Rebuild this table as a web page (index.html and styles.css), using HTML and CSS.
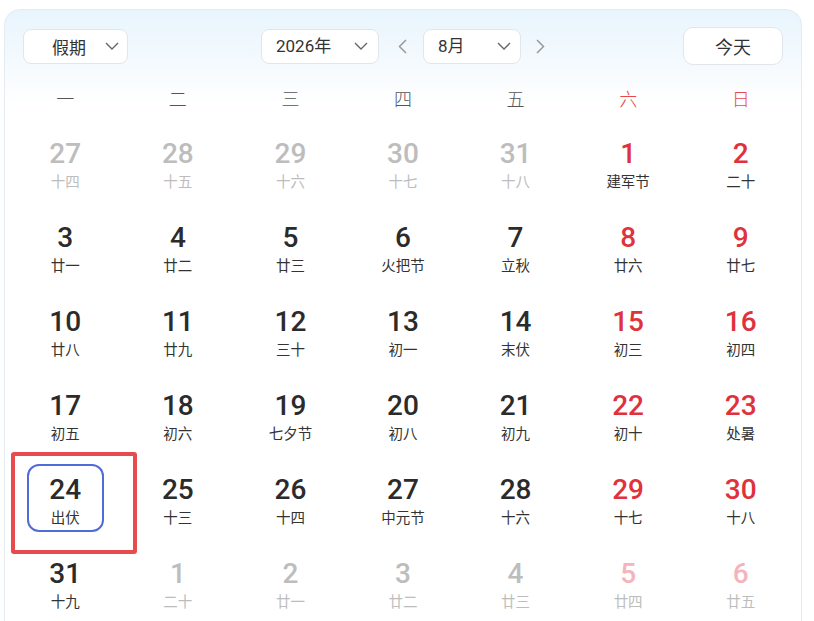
FILE: index.html
```html
<!DOCTYPE html>
<html lang="zh-CN">
<head>
<meta charset="utf-8">
<title>日历</title>
<link rel="stylesheet" href="styles.css">
</head>
<body>
<div class="card">
  <div class="header">
    <div class="left">
      <div class="select sel-holiday"><span class="sel-text">假期</span><svg class="chev" width="14" height="8" viewBox="0 0 14 8"><path d="M1 1l6 6 6-6" fill="none" stroke="#666" stroke-width="1.4"/></svg></div>
    </div>
    <div class="center">
      <div class="select sel-year"><span class="sel-text">2026年</span><svg class="chev" width="14" height="8" viewBox="0 0 14 8"><path d="M1 1l6 6 6-6" fill="none" stroke="#666" stroke-width="1.4"/></svg></div>
      <div class="arrow prev"><svg width="9" height="15" viewBox="0 0 9 15"><path d="M8 1L1.5 7.5 8 14" fill="none" stroke="#9a9a9a" stroke-width="1.5"/></svg></div>
      <div class="select sel-month"><span class="sel-text">8月</span><svg class="chev" width="14" height="8" viewBox="0 0 14 8"><path d="M1 1l6 6 6-6" fill="none" stroke="#666" stroke-width="1.4"/></svg></div>
      <div class="arrow next"><svg width="9" height="15" viewBox="0 0 9 15"><path d="M1 1l6.5 6.5L1 14" fill="none" stroke="#9a9a9a" stroke-width="1.5"/></svg></div>
    </div>
    <div class="right">
      <div class="today">今天</div>
    </div>
  </div>

  <div class="weekdays">
    <div class="wd">一</div><div class="wd">二</div><div class="wd">三</div><div class="wd">四</div><div class="wd">五</div><div class="wd weekend">六</div><div class="wd weekend">日</div>
  </div>

  <div class="grid">
    <div class="cell other"><div class="box"><div class="num">27</div><div class="lunar">十四</div></div></div>
    <div class="cell other"><div class="box"><div class="num">28</div><div class="lunar">十五</div></div></div>
    <div class="cell other"><div class="box"><div class="num">29</div><div class="lunar">十六</div></div></div>
    <div class="cell other"><div class="box"><div class="num">30</div><div class="lunar">十七</div></div></div>
    <div class="cell other"><div class="box"><div class="num">31</div><div class="lunar">十八</div></div></div>
    <div class="cell red"><div class="box"><div class="num">1</div><div class="lunar">建军节</div></div></div>
    <div class="cell red"><div class="box"><div class="num">2</div><div class="lunar">二十</div></div></div>

    <div class="cell"><div class="box"><div class="num">3</div><div class="lunar">廿一</div></div></div>
    <div class="cell"><div class="box"><div class="num">4</div><div class="lunar">廿二</div></div></div>
    <div class="cell"><div class="box"><div class="num">5</div><div class="lunar">廿三</div></div></div>
    <div class="cell"><div class="box"><div class="num">6</div><div class="lunar">火把节</div></div></div>
    <div class="cell"><div class="box"><div class="num">7</div><div class="lunar">立秋</div></div></div>
    <div class="cell red"><div class="box"><div class="num">8</div><div class="lunar">廿六</div></div></div>
    <div class="cell red"><div class="box"><div class="num">9</div><div class="lunar">廿七</div></div></div>

    <div class="cell"><div class="box"><div class="num">10</div><div class="lunar">廿八</div></div></div>
    <div class="cell"><div class="box"><div class="num">11</div><div class="lunar">廿九</div></div></div>
    <div class="cell"><div class="box"><div class="num">12</div><div class="lunar">三十</div></div></div>
    <div class="cell"><div class="box"><div class="num">13</div><div class="lunar">初一</div></div></div>
    <div class="cell"><div class="box"><div class="num">14</div><div class="lunar">末伏</div></div></div>
    <div class="cell red"><div class="box"><div class="num">15</div><div class="lunar">初三</div></div></div>
    <div class="cell red"><div class="box"><div class="num">16</div><div class="lunar">初四</div></div></div>

    <div class="cell"><div class="box"><div class="num">17</div><div class="lunar">初五</div></div></div>
    <div class="cell"><div class="box"><div class="num">18</div><div class="lunar">初六</div></div></div>
    <div class="cell"><div class="box"><div class="num">19</div><div class="lunar">七夕节</div></div></div>
    <div class="cell"><div class="box"><div class="num">20</div><div class="lunar">初八</div></div></div>
    <div class="cell"><div class="box"><div class="num">21</div><div class="lunar">初九</div></div></div>
    <div class="cell red"><div class="box"><div class="num">22</div><div class="lunar">初十</div></div></div>
    <div class="cell red"><div class="box"><div class="num">23</div><div class="lunar">处暑</div></div></div>

    <div class="cell selected"><div class="box"><div class="num">24</div><div class="lunar">出伏</div></div><div class="annot"></div></div>
    <div class="cell"><div class="box"><div class="num">25</div><div class="lunar">十三</div></div></div>
    <div class="cell"><div class="box"><div class="num">26</div><div class="lunar">十四</div></div></div>
    <div class="cell"><div class="box"><div class="num">27</div><div class="lunar">中元节</div></div></div>
    <div class="cell"><div class="box"><div class="num">28</div><div class="lunar">十六</div></div></div>
    <div class="cell red"><div class="box"><div class="num">29</div><div class="lunar">十七</div></div></div>
    <div class="cell red"><div class="box"><div class="num">30</div><div class="lunar">十八</div></div></div>

    <div class="cell"><div class="box"><div class="num">31</div><div class="lunar">十九</div></div></div>
    <div class="cell other"><div class="box"><div class="num">1</div><div class="lunar">二十</div></div></div>
    <div class="cell other"><div class="box"><div class="num">2</div><div class="lunar">廿一</div></div></div>
    <div class="cell other"><div class="box"><div class="num">3</div><div class="lunar">廿二</div></div></div>
    <div class="cell other"><div class="box"><div class="num">4</div><div class="lunar">廿三</div></div></div>
    <div class="cell other pale"><div class="box"><div class="num">5</div><div class="lunar">廿四</div></div></div>
    <div class="cell other pale"><div class="box"><div class="num">6</div><div class="lunar">廿五</div></div></div>
  </div>
</div>
</body>
</html>
```

FILE: styles.css
```css
* { box-sizing: border-box; }
html, body { margin: 0; padding: 0; background: #fff; overflow: hidden; }
body {
  font-family: "Noto Sans CJK SC", "Noto Sans", sans-serif;
  color: #333;
}
.card {
  margin: 9px 0 0 4px;
  width: 798px;
  height: 680px;
  border: 1px solid #e4ebf1;
  border-radius: 16px;
  background: linear-gradient(180deg, #e8f5fd 0px, #f5fafe 55px, #ffffff 95px);
}
.header {
  display: grid;
  grid-template-columns: 1fr auto 1fr;
  align-items: center;
  padding: 17px 18px 0 18px;
  height: 55px;
}
.left { display: flex; }
.right { display: flex; justify-content: flex-end; }
.center { display: flex; align-items: center; }
.select {
  display: flex;
  align-items: center;
  height: 35px;
  background: #fff;
  border: 1px solid #e2e6ea;
  border-radius: 8px;
  font-size: 17px;
  color: #333;
}
.sel-text { flex: 1; line-height: 1; }
.chev { flex: none; }
.sel-holiday { width: 105px; padding: 0 8px 0 28px; }
.sel-year { width: 118px; padding: 0 10px 0 14px; font-family: "Roboto", "Noto Sans CJK SC", sans-serif; }
.sel-month { width: 98px; padding: 0 9px 0 14px; font-family: "Roboto", "Noto Sans CJK SC", sans-serif; }
.arrow { display: flex; align-items: center; height: 35px; }
.prev { width: 44px; justify-content: center; padding-left: 2px; }
.next { width: 24px; justify-content: flex-end; }
.today {
  width: 100px;
  height: 38px;
  border: 1px solid #e2e6ea;
  border-radius: 10px;
  background: #fff;
  display: flex;
  align-items: center;
  justify-content: center;
  font-size: 18px;
  color: #333;
}
.weekdays {
  display: grid;
  grid-template-columns: repeat(7, 1fr);
  margin: 12px 4px 0 4px;
  height: 42px;
}
.wd {
  display: flex;
  align-items: center;
  justify-content: center;
  font-size: 18px;
  color: #555;
  font-weight: 300;
}
.wd.weekend { color: #e8484c; }
.grid {
  display: grid;
  grid-template-columns: repeat(7, 1fr);
  grid-auto-rows: 84px;
  margin: 0 4px;
}
.cell {
  position: relative;
  display: flex;
  justify-content: center;
  padding-top: 9px;
}
.box {
  width: 77px;
  height: 68px;
  border: 2px solid transparent;
  border-radius: 12px;
  display: flex;
  flex-direction: column;
  align-items: center;
  padding-top: 9px;
}
.num {
  font-family: "Roboto", sans-serif;
  font-weight: 500;
  font-size: 28px;
  line-height: 30px;
  color: #2b2b2b;
}
.lunar {
  font-size: 14.5px;
  line-height: 24px;
  color: #333;
}
.red .num { color: #e0323c; }
.other .num { color: #bdbdbd; }
.other .lunar { color: #bdbdbd; }
.pale .num { color: #f4b4bb; }
.selected .box { border-color: #4f6cd8; }
.annot {
  position: absolute;
  left: 2px;
  top: -3px;
  width: 126px;
  height: 102px;
  border: 4px solid #e84b4d;
  border-radius: 3px;
  pointer-events: none;
}
```
